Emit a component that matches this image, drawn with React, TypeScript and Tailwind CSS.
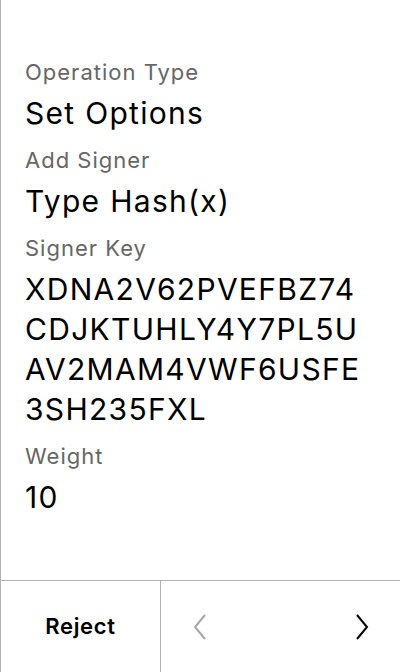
import React from "react";

const rows = [
  { label: "Operation Type", value: ["Set Options"] },
  { label: "Add Signer", value: ["Type Hash(x)"] },
  {
    label: "Signer Key",
    value: ["XDNA2V62PVEFBZ74", "CDJKTUHLY4Y7PL5U", "AV2MAM4VWF6USFE", "3SH235FXL"],
  },
  { label: "Weight", value: ["10"] },
];

function Chevron({ dir, color }: { dir: "left" | "right"; color: string }) {
  return (
    <svg width="16" height="28" viewBox="0 0 16 28" fill="none">
      <path
        d={dir === "left" ? "M13 2 L3 14 L13 26" : "M3 2 L13 14 L3 26"}
        stroke={color}
        strokeWidth="2"
      />
    </svg>
  );
}

export default function App() {
  return (
    <div
      className="w-[400px] h-[672px] flex flex-col bg-white border-l border-[#b3b3b3]"
      style={{ fontFamily: "Inter, 'Noto Sans', sans-serif" }}
    >
      <div className="flex-1 flex flex-col gap-[13px] pl-[24px] pt-[58px]">
        {rows.map((r) => (
          <div key={r.label} className="flex flex-col">
            <div className="text-[22px] leading-[28px] tracking-[1px] text-[#666666]">{r.label}</div>
            <div className="mt-[7px] text-[30px] leading-[40px] tracking-[1.3px] text-black">
              {r.value.map((v) => (
                <div key={v}>{v}</div>
              ))}
            </div>
          </div>
        ))}
      </div>
      <div className="h-[92px] flex border-t border-[#b3b3b3]">
        <div className="w-[160px] flex items-center justify-center border-r border-[#b3b3b3] text-[22px] font-semibold tracking-[0.7px] text-black">
          Reject
        </div>
        <div className="flex-1 flex items-center justify-between pl-[31px] pr-[30px]">
          <Chevron dir="left" color="#a6a6a6" />
          <Chevron dir="right" color="#000000" />
        </div>
      </div>
    </div>
  );
}
